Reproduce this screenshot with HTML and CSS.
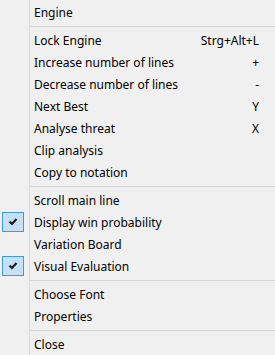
FILE: index.html
```html
<!DOCTYPE html>
<html lang="en">
<head>
    <meta charset="UTF-8">
    <title>Engine menu</title>
    <link rel="stylesheet" href="styles.css">
</head>
<body>
    <div class="menu">
        <div class="item"><span class="gutter"></span><span class="label">Engine</span></div>
        <div class="sep"></div>
        <div class="item"><span class="gutter"></span><span class="label">Lock Engine</span><span class="key">Strg+Alt+L</span></div>
        <div class="item"><span class="gutter"></span><span class="label">Increase number of lines</span><span class="key">+</span></div>
        <div class="item"><span class="gutter"></span><span class="label">Decrease number of lines</span><span class="key">-</span></div>
        <div class="item"><span class="gutter"></span><span class="label">Next Best</span><span class="key">Y</span></div>
        <div class="item"><span class="gutter"></span><span class="label">Analyse threat</span><span class="key">X</span></div>
        <div class="item"><span class="gutter"></span><span class="label">Clip analysis</span></div>
        <div class="item"><span class="gutter"></span><span class="label">Copy to notation</span></div>
        <div class="sep"></div>
        <div class="item"><span class="gutter"></span><span class="label">Scroll main line</span></div>
        <div class="item">
            <span class="gutter"><span class="check"><svg width="20" height="18" viewBox="0 0 20 18"><path d="M6.5 8.5 L9 11 L13.5 6" fill="none" stroke="#1e1e1e" stroke-width="2.2"/></svg></span></span>
            <span class="label">Display win probability</span>
        </div>
        <div class="item"><span class="gutter"></span><span class="label">Variation Board</span></div>
        <div class="item">
            <span class="gutter"><span class="check"><svg width="20" height="18" viewBox="0 0 20 18"><path d="M6.5 8.5 L9 11 L13.5 6" fill="none" stroke="#1e1e1e" stroke-width="2.2"/></svg></span></span>
            <span class="label">Visual Evaluation</span>
        </div>
        <div class="sep"></div>
        <div class="item"><span class="gutter"></span><span class="label">Choose Font</span></div>
        <div class="item"><span class="gutter"></span><span class="label">Properties</span></div>
        <div class="sep"></div>
        <div class="item"><span class="gutter"></span><span class="label">Close</span></div>
    </div>
</body>
</html>
```

FILE: styles.css
```css
body {
    margin: 0;
    background-color: #f0f0f0;
    font-family: "Segoe UI", "Noto Sans", sans-serif;
    font-size: 12px;
    color: #000;
}

.menu {
    width: 275px;
    height: 355px;
    overflow: hidden;
    padding-top: 1px;
    box-sizing: border-box;
    background-image: linear-gradient(to right, transparent 29px, #d9d9d9 29px, #d9d9d9 30px, transparent 30px);
}

.item {
    display: flex;
    align-items: center;
    height: 22px;
}

.gutter {
    width: 34px;
    height: 22px;
    display: flex;
    align-items: center;
    flex-shrink: 0;
}

.check {
    margin-left: 2px;
    width: 20px;
    height: 18px;
    border: 1px solid #3d9be0;
    background-color: #c6e1f5;
    display: flex;
}

.label {
    flex: 1;
    white-space: nowrap;
    padding-top: 1px;
}

.key {
    padding-right: 16px;
    padding-top: 1px;
    white-space: nowrap;
}

.sep {
    height: 1px;
    margin: 3px 0 2px 30px;
    background-color: #d7d7d7;
}
```
